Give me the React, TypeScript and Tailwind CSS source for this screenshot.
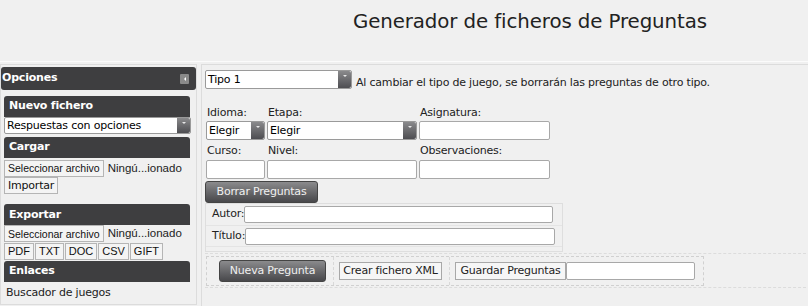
import React from "react";

const V = { fontFamily: '"DejaVu Sans", Verdana, sans-serif' };
const A = { fontFamily: '"Liberation Sans", Arial, sans-serif' };

function Arrow({ w = 13 }: { w?: number }) {
  return (
    <div
      className="flex items-start justify-center self-stretch bg-gradient-to-b from-[#8a8a8c] to-[#4e4e52] rounded-r-[2px]"
      style={{ width: w }}
    >
      <div className="mt-[4px] w-0 h-0 border-l-[2px] border-r-[2px] border-t-[2px] border-l-transparent border-r-transparent border-t-[#e8e8e8]" />
    </div>
  );
}

function Select({ text, w, h = 18 }: { text: string; w: number; h?: number }) {
  return (
    <div
      className="flex bg-white border border-[#9a9a9a] rounded-[2px] text-[11px] tracking-[-0.2px] text-black leading-none whitespace-nowrap"
      style={{ width: w, height: h }}
    >
      <div className="flex-1 flex items-center pl-[2px]">{text}</div>
      <Arrow />
    </div>
  );
}

function Bar({ children }: { children: React.ReactNode }) {
  return (
    <div className="h-[21px] mx-[3px] w-[186px] rounded-t-[3px] bg-[#3e3e40] text-white font-bold text-[11px] tracking-[-0.2px] flex items-center pl-[5px] whitespace-nowrap">
      {children}
    </div>
  );
}

function FBtn({ children, cls = "" }: { children: React.ReactNode; cls?: string }) {
  return (
    <div
      className={"h-[17px] border border-[#b5b5b5] bg-[#f4f4f4] leading-none flex items-center text-[#111] whitespace-nowrap " + cls}
      style={A}
    >
      {children}
    </div>
  );
}

function DarkBtn({ children, w, h }: { children: React.ReactNode; w: number; h: number }) {
  return (
    <div
      className="rounded-[3px] bg-gradient-to-b from-[#8b8b8d] to-[#48484b] text-[#f0f0f0] text-[11px] tracking-[-0.2px] flex items-center justify-center border border-[#444] whitespace-nowrap"
      style={{ width: w, height: h }}
    >
      {children}
    </div>
  );
}

function Input({ w, h = 18 }: { w: number; h?: number }) {
  return <div className="bg-white border border-[#a8a8a8] rounded-[2px] shrink-0" style={{ width: w, height: h }} />;
}

export default function App() {
  return (
    <div className="w-[808px] h-[306px] overflow-hidden bg-[#f0f0f0] text-[#222]" style={V}>
      <header className="h-[62px] border-b border-[#fbfbfb]">
        <h1 className="pl-[353px] pt-[10px] text-[19.8px] tracking-[-0.1px] leading-[24px] text-[#222] whitespace-nowrap">
          Generador de ficheros de Preguntas
        </h1>
      </header>
      <div className="flex pt-[2px] gap-[4px]">
        <aside className="w-[198px] h-[241px] border border-[#dcdcdc] pt-[2px] bg-[#f0f0f0]">
          <div className="h-[23px] w-[195px] rounded-[3px] bg-[#3e3e40] text-white font-bold text-[11px] tracking-[-0.2px] flex items-center pl-[1px] justify-between pr-[7px]">
            <span>Opciones</span>
            <div className="w-[9px] h-[10px] bg-[#8a8a8a] rounded-[1px] flex items-center justify-center">
              <div className="w-0 h-0 border-t-[2px] border-b-[2px] border-r-[2px] border-t-transparent border-b-transparent border-r-white" />
            </div>
          </div>
          <div className="h-[6px]" />
          <Bar>Nuevo fichero</Bar>
          <div className="mx-[3px]">
            <Select text="Respuestas con opciones" w={187} h={17} />
          </div>
          <div className="h-[3px]" />
          <Bar>Cargar</Bar>
          <div className="h-[2px]" />
          <div className="flex items-center mx-[3px]" style={A}>
            <FBtn cls="text-[10.5px] px-[3px]">Seleccionar archivo</FBtn>
            <span className="ml-[4px] text-[11.5px] whitespace-nowrap">Ningú...ionado</span>
          </div>
          <div className="flex mx-[3px]">
            <div className="h-[17px] border border-[#b5b5b5] bg-[#f4f4f4] text-[11px] tracking-[-0.2px] leading-none flex items-center px-[3px] text-[#111] whitespace-nowrap">
              Importar
            </div>
          </div>
          <div className="h-[10px]" />
          <Bar>Exportar</Bar>
          <div className="flex items-center mx-[3px]" style={A}>
            <FBtn cls="text-[10.5px] px-[3px]">Seleccionar archivo</FBtn>
            <span className="ml-[4px] text-[11.5px] whitespace-nowrap">Ningú...ionado</span>
          </div>
          <div className="flex mx-[3px] gap-[1px]">
            <FBtn cls="text-[11px] px-[3px]">PDF</FBtn>
            <FBtn cls="text-[11px] px-[3px]">TXT</FBtn>
            <FBtn cls="text-[11px] px-[3px]">DOC</FBtn>
            <FBtn cls="text-[11px] px-[3px]">CSV</FBtn>
            <FBtn cls="text-[11px] px-[3px]">GIFT</FBtn>
          </div>
          <div className="h-[1px]" />
          <Bar>Enlaces</Bar>
          <div className="pl-[5px] pt-[3px] text-[11px] tracking-[-0.2px] text-[#222] whitespace-nowrap">Buscador de juegos</div>
        </aside>
        <main className="flex-1 h-[245px] border border-[#dcdcdc] border-r-0 pl-[3px] pt-[5px]">
          <div className="flex items-end">
            <Select text="Tipo 1" w={147} h={19} />
            <span className="ml-[4px] text-[11px] tracking-[-0.2px] leading-none mb-[1px] whitespace-nowrap">
              Al cambiar el tipo de juego, se borrarán las preguntas de otro tipo.
            </span>
          </div>
          <div className="mt-[17px] flex text-[11px] tracking-[-0.2px] leading-[14px] pl-[2px]">
            <span className="w-[61px]">Idioma:</span>
            <span className="w-[152px]">Etapa:</span>
            <span>Asignatura:</span>
          </div>
          <div className="mt-[1px] flex gap-[2px] pl-[1px]">
            <Select text="Elegir" w={59} h={19} />
            <Select text="Elegir" w={150} h={19} />
            <Input w={131} h={19} />
          </div>
          <div className="mt-[4px] flex text-[11px] tracking-[-0.2px] leading-[14px] pl-[2px]">
            <span className="w-[61px]">Curso:</span>
            <span className="w-[152px]">Nivel:</span>
            <span>Observaciones:</span>
          </div>
          <div className="mt-[2px] flex gap-[2px] pl-[1px]">
            <Input w={59} h={19} />
            <Input w={150} h={19} />
            <Input w={131} h={19} />
          </div>
          <div className="mt-[2px] flex">
            <DarkBtn w={113} h={22}>Borrar Preguntas</DarkBtn>
          </div>
          <div className="w-[358px] border border-[#dedede] text-[11px] tracking-[-0.2px]">
            <div className="h-[22px] flex items-center pl-[6px] border-b border-[#e4e4e4]">
              <span>Autor:</span>
              <Input w={309} h={17} />
            </div>
            <div className="h-[21px] flex items-center pl-[6px] border-b border-[#e4e4e4]">
              <span>Título:</span>
              <Input w={310} h={17} />
            </div>
            <div className="h-[4px]" />
          </div>
          <div className="mt-[1px] w-[606px] border-t border-b border-dashed border-[#dcdcdc] pt-[2px] pb-[1px]">
            <div className="ml-[1px] w-[498px] h-[30px] border border-dashed border-[#d0d0d0] flex items-center text-[11px] tracking-[-0.2px]">
              <div className="w-[127px] flex items-center pl-[12px] h-full border-r border-dashed border-[#d8d8d8]">
                <DarkBtn w={107} h={22}>Nueva Pregunta</DarkBtn>
              </div>
              <div className="w-[116px] flex items-center pl-[5px] h-full border-r border-dashed border-[#d8d8d8]">
                <div className="h-[18px] w-[103px] border border-[#a8a8a8] bg-[#f6f6f6] flex items-center justify-center whitespace-nowrap">Crear fichero XML</div>
              </div>
              <div className="flex items-center pl-[5px] h-full">
                <div className="h-[18px] w-[111px] border border-[#a8a8a8] bg-[#f6f6f6] flex items-center justify-center whitespace-nowrap">Guardar Preguntas</div>
                <Input w={129} h={18} />
              </div>
            </div>
          </div>
        </main>
      </div>
    </div>
  );
}
